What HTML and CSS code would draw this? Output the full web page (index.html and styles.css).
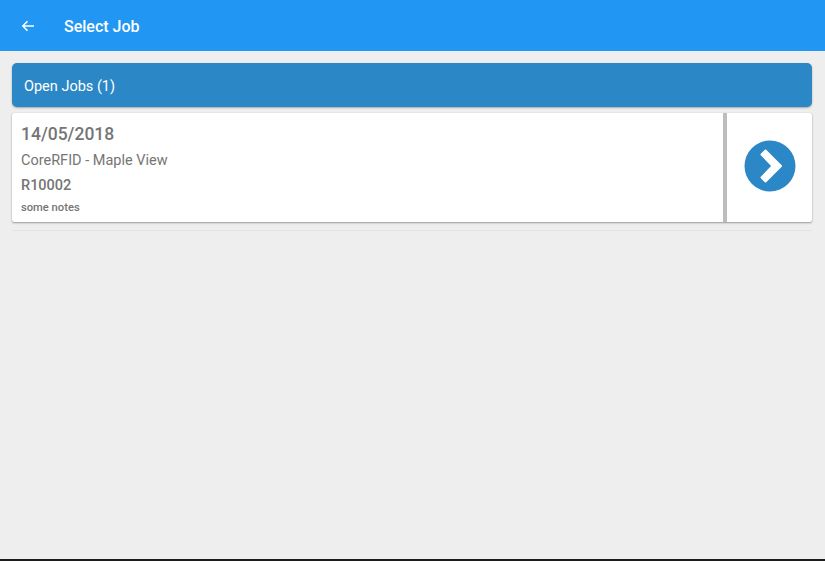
FILE: index.html
```html
<!DOCTYPE html>
<html lang="en">
<head>
<meta charset="utf-8">
<title>Select Job</title>
<link rel="stylesheet" href="styles.css">
</head>
<body>
<div class="app">
  <header class="toolbar">
    <svg class="back" width="14" height="14" viewBox="0 0 14 14" aria-hidden="true"><path d="M13 7H2M6.5 2.2 1.8 7l4.7 4.8" fill="none" stroke="#fff" stroke-width="1.5"/></svg>
    <h1 class="title">Select Job</h1>
  </header>
  <main class="content">
    <div class="section-head">Open Jobs (1)</div>
    <div class="job-card">
      <div class="job-info">
        <div class="job-date">14/05/2018</div>
        <div class="job-site">CoreRFID - Maple View</div>
        <div class="job-ref">R10002</div>
        <div class="job-notes">some notes</div>
      </div>
      <div class="job-action">
        <svg width="52" height="52" viewBox="0 0 52 52" aria-hidden="true"><circle cx="26" cy="26" r="25.5" fill="#2b87c6"/><path d="M21.5 10.5 17.5 14.5 28.5 26 17.5 37.5 21.5 41.5 37 26Z" fill="#fff" stroke="#fff" stroke-width="2" stroke-linejoin="round"/></svg>
      </div>
    </div>
    <div class="divider"></div>
  </main>
  <div class="bottom-edge"></div>
</div>
</body>
</html>
```
FILE: styles.css
```css
* { box-sizing: border-box; }
html, body { margin: 0; height: 100%; }
body { font-family: Roboto, "Liberation Sans", sans-serif; background: #eeeeee; overflow: hidden; }
.app { display: flex; flex-direction: column; height: 561px; }
.toolbar { flex: none; height: 51px; background: #2196f3; display: flex; align-items: center; padding-left: 21px; padding-top: 1px; }
.back { flex: none; }
.title { margin: 0 0 0 29px; font-size: 16px; font-weight: 500; color: #fff; }
.content { flex: 1; padding: 12px 13px 0 12px; display: flex; flex-direction: column; }
.section-head { height: 44px; background: #2b87c6; border-radius: 5px; color: #fff; font-size: 14.5px; display: flex; align-items: center; padding-left: 12px; padding-top: 3px; box-shadow: 0 1px 2px rgba(0,0,0,.3); }
.job-card { margin-top: 6px; height: 109px; background: #fff; border-radius: 2px; display: flex; box-shadow: 0 1px 2px rgba(0,0,0,.35), 0 0 1px rgba(0,0,0,.2); }
.job-info { flex: 1; padding: 11px 0 0 9px; border-right: 4px solid #bdbdbd; color: #757575; }
.job-date { font-size: 17.5px; font-weight: 500; line-height: 20px; }
.job-site { font-size: 14.5px; line-height: 16px; margin-top: 9px; }
.job-ref { font-size: 14.5px; font-weight: 500; line-height: 16px; margin-top: 9px; }
.job-notes { font-size: 11.2px; font-weight: 500; line-height: 12px; margin-top: 8px; }
.job-action { flex: none; width: 85px; display: flex; align-items: center; justify-content: center; padding-bottom: 3px; }
.divider { margin-top: 8px; height: 1px; background: #e4e4e4; }
.bottom-edge { flex: none; height: 2px; background: #1c1c1c; }
```
